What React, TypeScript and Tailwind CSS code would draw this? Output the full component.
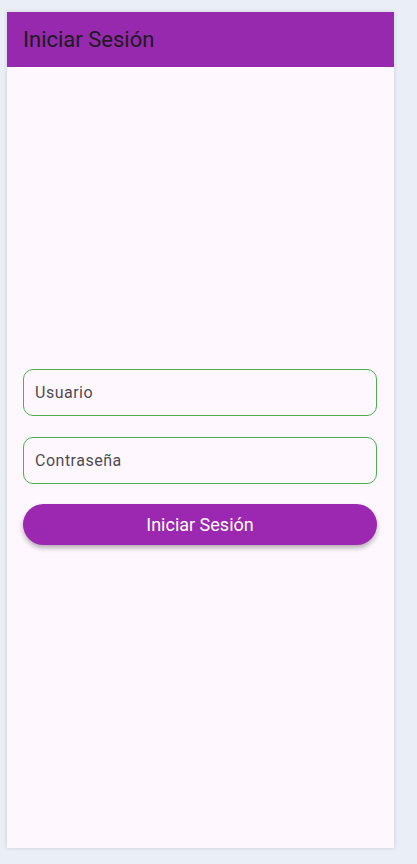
export default function App() {
  return (
    <div className="min-h-screen w-full bg-[#eaeef6] pt-[12px] pl-[7px]" style={{ fontFamily: 'Roboto, "Liberation Sans", sans-serif' }}>
      <div className="flex h-[836px] w-[387px] flex-col bg-[#fff7fe] shadow-[0_0_4px_rgba(0,0,0,0.15)]">
        <header className="flex h-[55px] items-center bg-[#9629ae] px-[16px]">
          <h1 className="text-[22px] text-[#1d1b20]">Iniciar Sesión</h1>
        </header>

        <main className="flex flex-1 flex-col justify-center gap-[20px] pl-[16px] pr-[17px] pb-[2px]">
          <input
            placeholder="Usuario"
            className="mb-[1px] h-[47px] w-full rounded-[10px] border border-[#4caf50] bg-transparent px-[11px] text-[16px] tracking-[0.5px] text-[#49454f] outline-none placeholder:text-[#4f4b55]"
          />
          <input
            type="password"
            placeholder="Contraseña"
            className="h-[47px] w-full rounded-[10px] border border-[#4caf50] bg-transparent px-[11px] text-[16px] tracking-[0.5px] text-[#49454f] outline-none placeholder:text-[#4f4b55]"
          />
          <button className="h-[41px] w-full rounded-full bg-[#9c27b0] text-[18px] text-white shadow-[0_3px_5px_rgba(0,0,0,0.3)]">
            Iniciar Sesión
          </button>
        </main>
      </div>
    </div>
  );
}
